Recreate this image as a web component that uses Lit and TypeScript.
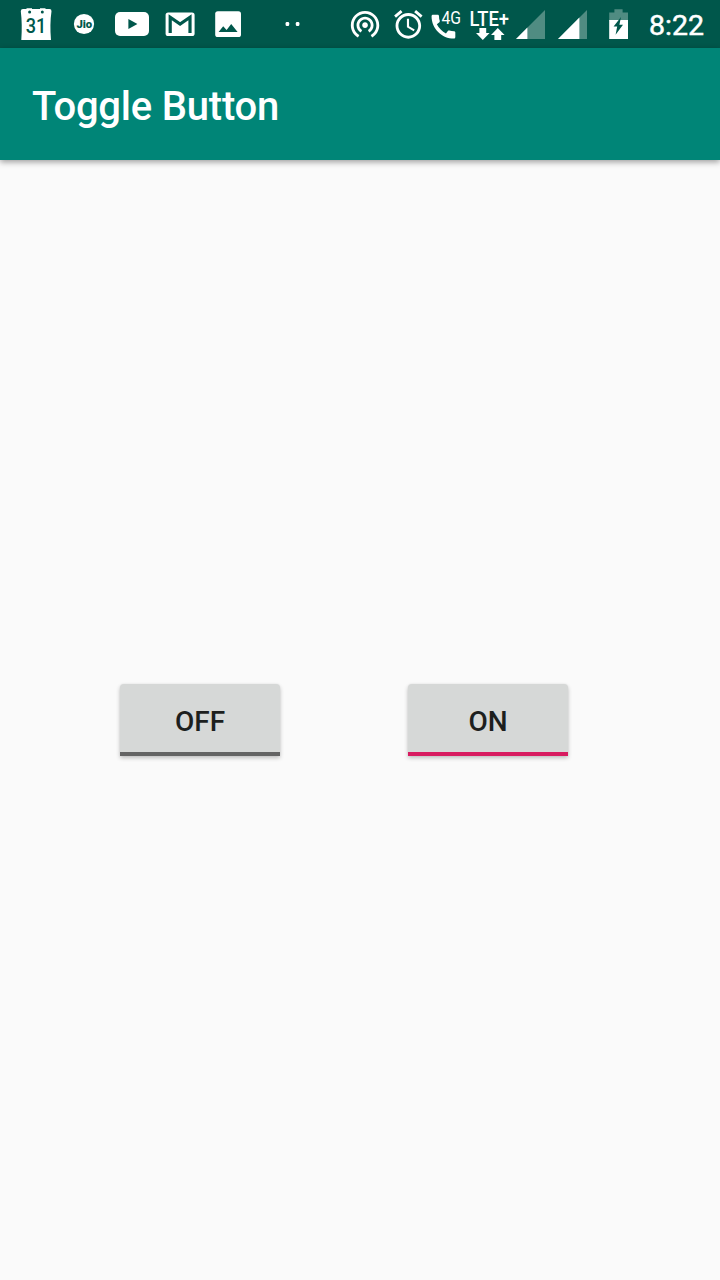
import { LitElement, html, css, svg } from "lit";
import { customElement, property } from "lit/decorators.js";

@customElement("status-bar")
class StatusBar extends LitElement {
  static styles = css`
    :host { display: flex; height: 48px; background: #00574b; color: #fff; align-items: center; }
    svg { display: block; height: 48px; flex: none; overflow: visible; fill: #fff; font-family: Roboto, sans-serif; }
    .dark { fill: #00574b; }
    .line { fill: none; stroke: #00574b; stroke-width: 3.2; }
    .dim { fill: #508c82; }
    .day { font-size: 19.5px; font-weight: 500; fill: #00574b; }
    .jio { font-size: 11.5px; font-weight: 900; fill: #00574b; }
    .net { font-size: 18px; font-weight: 400; }
    .lte { font-size: 20px; font-weight: 500; }
    .time { font: 400 28.5px/48px Roboto, sans-serif; -webkit-text-stroke: 0.5px #fff; padding: 3px 0 0 11px; white-space: nowrap; }
  `;

  // Every glyph shares the bar's coordinate space; each slot shows its own slice of it.
  private slot_(x: number, w: number, art: unknown) {
    return html`<svg width=${w} height="48" viewBox="${x} 0 ${w} 48" aria-hidden="true">${art}</svg>`;
  }

  render() {
    return html`
      ${this.slot_(0, 60, svg`
        <path d="M23 9H26.5V8.2H32V9H40V8.2H45.5V9H49.5Q51.6 9 51.5 11.2Q49.6 24 51 40H21.3Q22.4 24 20.8 11.2Q20.8 9 23 9Z"/>
        <circle class="dark" cx="29.6" cy="12" r="1.5"/><circle class="dark" cx="42.3" cy="12" r="1.5"/>
        <text class="day" x="25.8" y="33.3" textLength="20.6" lengthAdjust="spacingAndGlyphs">31</text>`)}
      ${this.slot_(60, 48, svg`
        <circle cx="84" cy="24" r="10.1"/>
        <text class="jio" x="76.4" y="28" textLength="15.8" lengthAdjust="spacingAndGlyphs">Jio</text>`)}
      ${this.slot_(108, 48, svg`
        <rect x="115" y="12" width="34" height="24" rx="5"/><path class="dark" d="M128.4 19L137.4 24L128.4 29Z"/>`)}
      ${this.slot_(156, 48, svg`
        <rect x="165.6" y="12.4" width="29" height="23.6" rx="2.6"/>
        <path class="line" d="M170.2 33V17.2L180.1 24L190 17.2V33"/>`)}
      ${this.slot_(204, 66, svg`
        <rect x="215.2" y="11.2" width="25.8" height="25.8" rx="2.6"/>
        <path class="dark" d="M218.6 32L223.2 26.2L226.6 30L231.2 24L237.6 32Z"/>`)}
      ${this.slot_(270, 76, svg`<rect x="285.6" y="22" width="3.6" height="4" rx="1.2"/><rect x="295.8" y="22" width="3.6" height="4" rx="1.2"/>`)}
      ${this.slot_(346, 42, svg`
        <path transform="translate(348 6.7) scale(1.42)" d="M12 11c-1.1 0-2 .9-2 2s.9 2 2 2 2-.9 2-2-.9-2-2-2zm6 2c0-3.31-2.69-6-6-6s-6 2.69-6 6c0 2.22 1.21 4.15 3 5.19l1-1.74c-1.19-.7-2-1.97-2-3.45 0-2.21 1.79-4 4-4s4 1.79 4 4c0 1.48-.81 2.75-2 3.45l1 1.74c1.79-1.04 3-2.97 3-5.19zM12 3C6.48 3 2 7.48 2 13c0 3.7 2.01 6.92 4.99 8.65l1-1.73C5.61 18.53 4 15.96 4 13c0-4.42 3.58-8 8-8s8 3.58 8 8c0 2.96-1.61 5.53-4 6.92l1 1.73c2.99-1.73 5-4.95 5-8.65 0-5.52-4.48-10-10-10z"/>`)}
      ${this.slot_(388, 40, svg`
        <path transform="translate(391.3 7.4) scale(1.42)" d="M22 5.72l-4.6-3.86-1.29 1.53 4.6 3.86L22 5.72zM7.88 3.39L6.6 1.86 2 5.71l1.29 1.53 4.59-3.85zM12.5 8H11v6l4.75 2.85.75-1.23-4-2.37V8zM12 4c-4.97 0-9 4.03-9 9s4.02 9 9 9c4.97 0 9-4.03 9-9s-4.03-9-9-9zm0 16c-3.87 0-7-3.13-7-7s3.13-7 7-7 7 3.13 7 7-3.13 7-7 7z"/>`)}
      ${this.slot_(428, 38, svg`
        <path transform="translate(427.6 10.9) scale(1.32)" d="M20.01 15.38c-1.23 0-2.42-.2-3.53-.56-.35-.12-.74-.03-1.01.24l-1.57 1.97c-2.83-1.35-5.48-3.9-6.89-6.83l1.95-1.66c.27-.28.35-.67.24-1.02-.37-1.11-.56-2.3-.56-3.53 0-.54-.45-.99-.99-.99H4.19C3.65 3 3 3.24 3 3.99 3 13.28 10.73 21 20.01 21c.71 0 .99-.63.99-1.18v-3.45c0-.54-.45-.99-.99-.99z"/>
        <text class="net" x="441.4" y="24.3" textLength="19.6" lengthAdjust="spacingAndGlyphs">4G</text>`)}
      ${this.slot_(466, 46, svg`
        <text class="lte" x="469.6" y="26.2" textLength="39.4" lengthAdjust="spacingAndGlyphs">LTE+</text>
        <path d="M479.4 28H486.2V33H489.6L482.8 40L476 33H479.4ZM494.4 40H501.2V35H504.6L497.8 28L491 35H494.4Z"/>`)}
      ${this.slot_(512, 38, svg`<path class="dim" d="M516 39L545 10V39Z"/><path d="M516 39L527.4 27.6V39Z"/>`)}
      ${this.slot_(550, 42, svg`<path class="dim" d="M558 39L587 10V39Z"/><path d="M558 39L579.4 17.6V39Z"/>`)}
      ${this.slot_(592, 46, svg`
        <path class="dim" d="M609.2 21V12.4H614.4V9.2H622.6V12.4H628V21Z"/><rect x="609.2" y="20" width="18.8" height="19"/>
        <path class="dark" d="M621 17L613.6 26.6H617.2L615.6 34.8L623 24.8H619.4Z"/>`)}
      <span class="time">8:22</span>`;
  }
}

@customElement("toggle-button")
class ToggleButton extends LitElement {
  @property({ type: Boolean }) checked = false;
  static styles = css`
    button { display: block; box-sizing: border-box; width: 160px; height: 72px; padding: 7px 0 0; border: 0; border-bottom: 4px solid #646464; border-radius: 4px 4px 0 0; background: #d6d8d7; color: #1d1f1e; font: 500 28px/1 Roboto, sans-serif; box-shadow: 0 2px 4px rgba(0, 0, 0, 0.24), 0 0 2px rgba(0, 0, 0, 0.06); }
    button.on { border-bottom-color: #d81b60; }
  `;
  render() {
    return html`<button class=${this.checked ? "on" : "off"} @click=${() => (this.checked = !this.checked)}>${this.checked ? "ON" : "OFF"}</button>`;
  }
}

@customElement("app-root")
class AppRoot extends LitElement {
  static styles = css`
    :host { display: flex; flex-direction: column; width: 720px; height: 1280px; background: #fafafa; overflow: hidden; font-family: Roboto, sans-serif; }
    header { display: flex; align-items: center; box-sizing: border-box; height: 112px; padding: 5px 32px 0; background: #008577; box-shadow: 0 2px 6px rgba(0, 0, 0, 0.38); }
    h1 { margin: 0; font-size: 40px; letter-spacing: -0.22px; font-weight: 500; line-height: 48px; color: #fff; }
    main { flex: 1; display: flex; align-items: flex-start; gap: 128px; padding: 524px 120px 0; }
  `;
  render() {
    return html`
      <status-bar></status-bar>
      <header><h1>Toggle Button</h1></header>
      <main><toggle-button></toggle-button><toggle-button checked></toggle-button></main>`;
  }
}
